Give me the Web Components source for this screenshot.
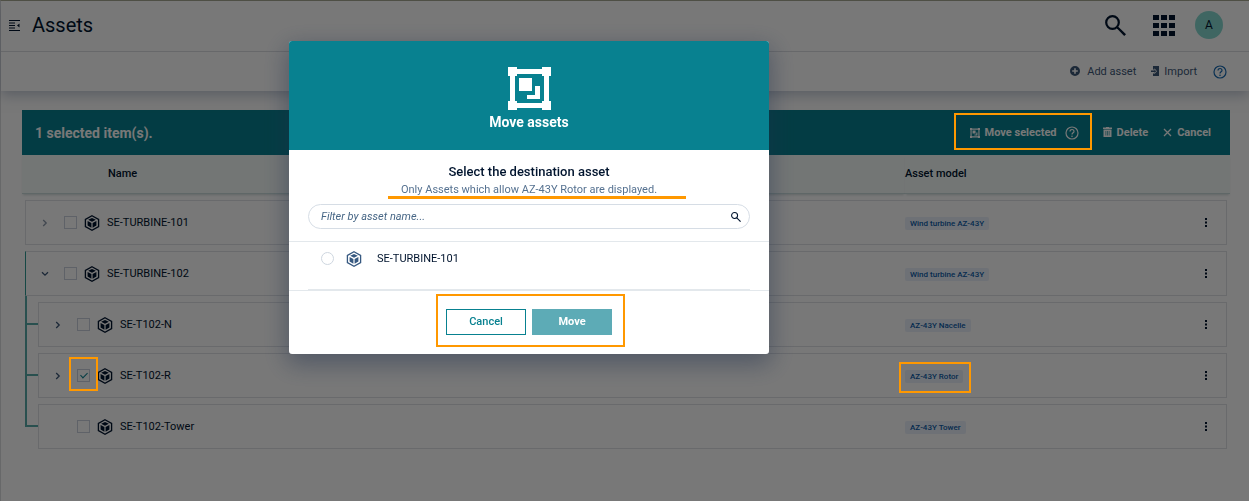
<!DOCTYPE html>
<html lang="en">
<head>
<meta charset="utf-8">
<meta name="viewport" content="width=device-width, initial-scale=1">
<title>Assets</title>
<style>
  html { background: #fff; }
  body { margin: 0; font: 11px/16px Roboto, "Liberation Sans", sans-serif; color: #00142e; }
</style>
</head>
<body>
<asset-app></asset-app>
<script>
const define = (name, html, setup) => {
  const template = document.createElement('template');
  template.innerHTML = html;
  customElements.define(name, class extends HTMLElement {
    connectedCallback() {
      if (this.shadowRoot) return;
      this.attachShadow({ mode: 'open' }).append(template.content.cloneNode(true));
      if (setup) setup(this, this.shadowRoot);
    }
  });
};

const ICONS = {
  menu: ['0 0 11 11', '<path d="M0 .5h11M0 3h6M0 5.500h6M0 8h6M0 10.500h11" stroke="currentColor" fill="none"/><path d="M10.500 3.500v4L8 5.500z" fill="currentColor"/>'],
  search: ['0 0 21 21', '<circle cx="7.500" cy="7.500" r="6.300" fill="none" stroke="currentColor" stroke-width="2.200"/><path d="M12 12l1.500 0L21 19.200 19.200 21 12 13.500z" fill="currentColor"/>'],
  apps: ['0 0 22 21', '<path d="M0 0h6v5H0zM8 0h6v5H8zM16 0h6v5h-6zM0 8h6v5H0zM8 8h6v5H8zM16 8h6v5h-6zM0 16h6v5H0zM8 16h6v5H8zM16 16h6v5h-6z" fill="currentColor"/>'],
  plus: ['0 0 12 12', '<path fill-rule="evenodd" d="M6 0a5 5 0 1 0 0 10A5 5 0 0 0 6 0zM5.200 2.200h1.600v2h2v1.600h-2v2H5.200v-2h-2V4.200h2z" fill="currentColor"/>'],
  import: ['0 0 10 12', '<path fill-rule="evenodd" d="M3 0h6v10H3V7.500h1.500V8L7 5.200 4.500 2.300V3.500H3z" fill="currentColor"/><path d="M1 4.600h3.500V3.500L6.200 5.200 4.500 7V5.900H1z" fill="currentColor"/>'],
  help: ['0 0 14 14', '<circle cx="7" cy="7" r="6" fill="none" stroke="currentColor" stroke-width="1.200"/><path d="M5 5.600C5 4.200 5.900 3.500 7 3.500s2 .8 2 1.900C9 6.800 7 6.900 7 8.500" fill="none" stroke="currentColor" stroke-width="1.200"/><circle cx="7" cy="10.300" r=".8" fill="currentColor"/>'],
  group: ['0 0 43 43', '<path fill-rule="evenodd" d="M0 0h9v2h25V0h9v9h-2v25h2v9h-9v-2H9v2H0v-9h2V9H0zM7 9v25h2v2h25v-2h2V9h-2V7H9v2z" fill="currentColor"/><path d="M11 11h13v13H11zM27 19h5v13H19v-4h8z" fill="currentColor"/>'],
  trash: ['0 0 9 11', '<path d="M0 .5h3V0h3v.5h3V2H0z" fill="currentColor"/><path fill-rule="evenodd" d="M.5 2.500h8V10h-8zM2.600 4v4.500h.6V4zm1.600 0v4.500h.6V4zm1.600 0v4.500h.6V4z" fill="currentColor"/>'],
  close: ['0 0 9 9', '<path d="M1 1l7 7M8 1L1 8" stroke="currentColor" stroke-width="1.300"/>'],
  asset: ['0 0 16 16', '<path d="M8 .8l6.600 3.700v7L8 15.200 1.400 11.500v-7z" fill="none" stroke="currentColor" stroke-width="1.300"/><path d="M8 3l3.800 1.800L8 6.800 4.200 4.800zM3.600 6l3.800 2v4.800l-3.800-2.200zM12.400 6L8.600 8v4.800l3.800-2.200z" fill="currentColor"/>'],
  chevron: ['0 0 6 8', '<path d="M1.200 1l3 3-3 3" fill="none" stroke="currentColor" stroke-width="1.300"/>'],
  kebab: ['0 0 2 9', '<path d="M0 0h2v2H0zM0 3.500h2v2H0zM0 7h2v2H0z" fill="currentColor"/>']
};

define('app-icon', `<style>:host{display:block;flex:none}svg{display:block;width:100%;height:100%}</style>`, (host, root) => {
  const [box, shape] = ICONS[host.getAttribute('name')];
  const holder = document.createElement('template');
  holder.innerHTML = `<svg viewBox="${box}" aria-hidden="true">${shape}</svg>`;
  root.append(holder.content);
});

/* Orange callout; the positioned parent sets the reach with --reach */
define('call-out', `<style>
  :host{position:absolute;inset:var(--reach);border:2px solid #ff9800;z-index:20;pointer-events:none}
</style>`);

define('icon-button', `<style>
  :host{display:block}
  button{display:flex;align-items:center;gap:var(--gap,5px);padding:0;border:0;background:none;font:inherit;color:inherit;white-space:nowrap}
</style><button type="button"><slot></slot></button>`, (host, root) => {
  if (host.hasAttribute('label')) root.querySelector('button').setAttribute('aria-label', host.getAttribute('label'));
});

define('app-header', `<style>
  :host{display:block;background:#fff;box-shadow:0 4px 12px #8290a880;position:relative}
  .top{display:flex;align-items:center;height:50px;padding:0 26px 2px 8px;box-sizing:border-box;height:51px;border-bottom:1px solid #dcdee2}
  h1{margin:0 auto 0 12px;font-size:20px;line-height:24px;font-weight:400}
  .menu{width:11px;height:11px}
  .search{width:21px;height:21px;margin-right:27px}
  .apps{width:22px;height:21px;margin-right:20px}
  .avatar{width:28px;height:28px;border-radius:50%;background:#87d9d0;display:grid;place-items:center;font-size:12px}
  .tools{display:flex;align-items:center;justify-content:flex-end;height:39px;padding-right:22px;color:#3d5878}
  .i12{width:12px;height:12px}.i10{width:10px;height:12px}.i14{width:14px;height:14px}
  .add{--gap:6px;margin-right:14px}.imp{--gap:4px;margin-right:16px}.help{color:#1769b0}
</style>
<div class="top">
  <icon-button label="Toggle menu"><app-icon class="menu" name="menu"></app-icon></icon-button>
  <h1>Assets</h1>
  <icon-button label="Search"><app-icon class="search" name="search"></app-icon></icon-button>
  <icon-button label="Applications"><app-icon class="apps" name="apps"></app-icon></icon-button>
  <div class="avatar">A</div>
</div>
<div class="tools">
  <icon-button class="add"><app-icon class="i12" name="plus"></app-icon>Add asset</icon-button>
  <icon-button class="imp"><app-icon class="i10" name="import"></app-icon>Import</icon-button>
  <icon-button class="help" label="Help"><app-icon class="i14" name="help"></app-icon></icon-button>
</div>`);

define('selection-bar', `<style>
  :host{display:flex;align-items:center;height:45px;padding:0 19px 0 13px;background:#088190;color:#fff;font-weight:700}
  p{margin:0 auto 0 0;font-size:14px;line-height:20px}
  .move{position:relative;display:flex;align-items:center;gap:8px;margin-right:24px;--reach:-12px -13px -9px -16px}
  .group{width:10px;height:10px}.help{width:14px;height:14px}
  .trash{width:9px;height:11px}.close{width:9px;height:9px}
  .del{margin-right:15px}
</style>
<p>1 selected item(s).</p>
<div class="move">
  <icon-button><app-icon class="group" name="group"></app-icon>Move selected</icon-button>
  <icon-button label="Help"><app-icon class="help" name="help"></app-icon></icon-button>
  <call-out></call-out>
</div>
<icon-button class="del"><app-icon class="trash" name="trash"></app-icon>Delete</icon-button>
<icon-button><app-icon class="close" name="close"></app-icon>Cancel</icon-button>`);

define('model-tag', `<style>
  :host{display:inline-block;position:relative;margin-top:2px;padding:0 5px;border-radius:2px;background:#eaf1fb;color:#0d5ca8;font-size:8px;line-height:13px;font-weight:500;--reach:-8px -8px -10px -6px}
</style><slot></slot>`);

define('asset-table', `<style>
  :host{display:block}
  table{width:100%;border-collapse:separate;border-spacing:0;table-layout:fixed}
  .model{width:325px}
  th{height:38px;padding:0;background:#f5faf9;border-bottom:1px solid #c9dcdc;box-shadow:0 2px 2px -1px #90a8a866;text-align:left;font-weight:500}
  th:first-child{padding-left:86px}
  td{position:relative;padding:6px 0 0}
  td:first-child{padding-left:3px}
  td:last-child{padding-right:3px}
  .cell{box-sizing:border-box;height:45px;display:flex;align-items:center;border:solid #dfe1e6;border-width:1px 0}
  td:first-child .cell{border-left-width:1px;padding-left:11px}
  td:last-child .cell{border-right-width:1px;justify-content:space-between;padding-right:19px}
  .child td:first-child{padding-left:16px}
  .open .cell.first{border-left-color:#2f9a94}
  .child td:first-child::before,.child td:first-child::after{content:"";position:absolute;left:3px;background:#58aaa8}
  .child td:first-child::before{top:0;bottom:0;width:2px}
  .child:last-child td:first-child::before{bottom:22px}
  .child td:first-child::after{bottom:22px;width:13px;height:2px}
  .turn{width:15px;height:16px;display:grid;place-items:center;margin-right:12px;color:#3d5878}
  .faint{color:#8b98aa}
  .turn app-icon{width:6px;height:8px}
  .open .turn app-icon{transform:rotate(90deg)}
  .box{position:relative;display:block;width:13px;height:13px;margin-right:7px;--reach:-12px -8px -9px -8px}
  input{appearance:none;display:grid;place-items:center;box-sizing:border-box;width:13px;height:13px;margin:0;border:1px solid #c9d1dd;background:transparent}
  input:checked::after{content:"";width:3px;height:6px;margin-bottom:2px;border:solid #088190;border-width:0 1px 1px 0;transform:rotate(45deg)}
  .cube{width:16px;height:16px;margin-right:7px}
  .kebab{width:2px;height:9px}
</style>
<table>
  <colgroup><col><col class="model"></colgroup>
  <thead><tr><th scope="col">Name</th><th scope="col">Asset model</th></tr></thead>
  <tbody></tbody>
</table>`, (host, root) => {
  const rows = [
    { name: 'SE-TURBINE-101', model: 'Wind turbine AZ-43Y', turn: 'faint' },
    { name: 'SE-TURBINE-102', model: 'Wind turbine AZ-43Y', turn: 'down', kind: 'open' },
    { name: 'SE-T102-N', model: 'AZ-43Y Nacelle', turn: 'right', kind: 'child' },
    { name: 'SE-T102-R', model: 'AZ-43Y Rotor', turn: 'right', kind: 'child', picked: true },
    { name: 'SE-T102-Tower', model: 'AZ-43Y Tower', kind: 'child' }
  ];
  root.querySelector('tbody').innerHTML = rows.map((r, i) => `<tr class="${r.kind || ''}">
    <td><div class="cell first">
      <span class="turn ${r.turn || ''}">${r.turn ? '<app-icon name="chevron"></app-icon>' : ''}</span>
      <span class="box"><input type="checkbox" id="pick${i}" ${r.picked ? 'checked' : ''}>${r.picked ? '<call-out></call-out>' : ''}</span>
      <app-icon class="cube" name="asset"></app-icon><label for="pick${i}">${r.name}</label>
    </div></td>
    <td><div class="cell"><model-tag>${r.model}${r.picked ? '<call-out></call-out>' : ''}</model-tag>
      <icon-button label="More actions"><app-icon class="kebab" name="kebab"></app-icon></icon-button></div></td>
  </tr>`).join('');
});

define('move-dialog', `<style>
  :host{position:fixed;inset:0;z-index:10;display:grid;grid-template-columns:289fr 480px 480fr;align-items:start;padding-top:41px;background:#00000087}
  section{grid-column:2;background:#fff;border-radius:3px;overflow:hidden;box-shadow:0 8px 24px 2px #1e2d4a70}
  header{box-sizing:border-box;height:109px;padding-top:26px;background:#088190;color:#fff;display:flex;flex-direction:column;align-items:center;gap:2px}
  header app-icon{width:43px;height:43px}
  h2{margin:0;font-size:14px;line-height:20px;font-weight:700}
  .find{padding:13px 19px 12px;text-align:center;border-bottom:1px solid #e3e8ec}
  h3{margin:0;font-size:13px;line-height:18px;font-weight:500}
  .note{position:relative;width:fit-content;margin:1px auto 6px;color:#567291}
  .note::after{content:"";position:absolute;left:-13px;right:-29px;bottom:-1px;height:3px;background:#ff9800}
  .field{display:flex;align-items:center;box-sizing:border-box;height:25px;padding:0 8px 0 12px;border:1px solid #d6dde5;border-radius:13px}
  .field input{flex:1;min-width:0;padding:0;border:0;outline:0;background:none;font:inherit;font-style:italic}
  .field input::placeholder{color:#486786;opacity:1}
  .field app-icon{width:10px;height:10px}
  .list{height:47px;margin:0 19px;border-bottom:1px solid #e3e8ec}
  .list label{display:flex;align-items:center;height:33px;padding-left:13px}
  .list input{appearance:none;box-sizing:border-box;width:13px;height:13px;margin:0 12px 0 0;border:1px solid #ced6df;border-radius:50%}
  .list app-icon{width:16px;height:16px;margin-right:15px;color:#365880}
  footer{padding:18px 0 19px;border-top:1px solid #e3e8ec}
  .actions{position:relative;display:flex;gap:6px;width:fit-content;margin:0 auto;--reach:-15px -13px -12px -10px}
  .actions button{box-sizing:border-box;width:80px;height:26px;padding:0;border:1px solid #088190;background:#fff;color:#088190;font:inherit;font-weight:500}
  .actions .go{border-color:#5dabb6;background:#5dabb6;color:#fff;font-weight:700}
</style>
<section role="dialog" aria-modal="true" aria-labelledby="title">
  <header><app-icon name="group"></app-icon><h2 id="title">Move assets</h2></header>
  <div class="find">
    <h3>Select the destination asset</h3>
    <div class="note">Only Assets which allow AZ-43Y Rotor are displayed.</div>
    <div class="field"><input type="text" aria-label="Filter by asset name" placeholder="Filter by asset name..."><app-icon name="search"></app-icon></div>
  </div>
  <div class="list"><label><input type="radio" name="target"><app-icon name="asset"></app-icon>SE-TURBINE-101</label></div>
  <footer><div class="actions"><button type="button">Cancel</button><button type="button" class="go">Move</button><call-out></call-out></div></footer>
</section>`);

define('asset-app', `<style>
  :host{display:block;box-sizing:border-box;min-height:100vh;border-top:1px solid #aeae92;border-left:1px solid #dcdde0;background:#fefefe}
  main{margin:19px 19px 0 21px}
</style>
<app-header></app-header>
<main><selection-bar></selection-bar><asset-table></asset-table></main>
<move-dialog></move-dialog>`);
</script>
</body>
</html>
